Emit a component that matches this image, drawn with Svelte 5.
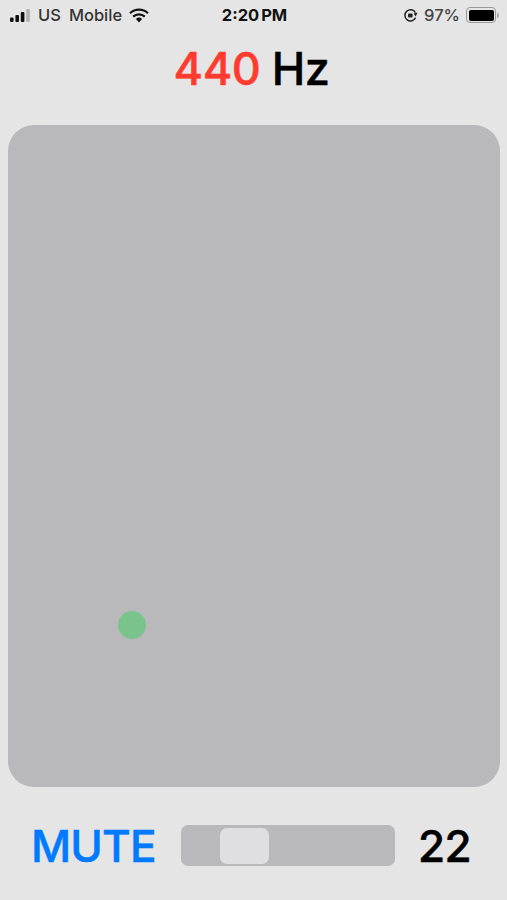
<script>
  let frequency = 440;
  let volume = 22;
  // dot position inside the pad
  let dot = { x: 123.5, y: 500 };
</script>

<div class="screen">
  <div class="status">
    <div class="left">
      <svg class="signal" width="22" height="14" viewBox="0 0 22 14">
        <rect x="0" y="9.5" width="3.6" height="4.5" rx="1" fill="#111" />
        <rect x="5.4" y="7" width="3.6" height="7" rx="1" fill="#111" />
        <rect x="10.8" y="4" width="3.6" height="10" rx="1" fill="#111" />
        <rect x="16.2" y="1" width="3.6" height="13" rx="1" fill="#b4b4b4" />
      </svg>
      <span class="carrier">US</span>
      <span class="carrier">Mobile</span>
      <svg class="wifi" width="20" height="15" viewBox="0 0 20 15">
        <path d="M1 5.2a13 13 0 0 1 18 0" fill="none" stroke="#111" stroke-width="2.2" />
        <path d="M4.2 8.6a8.4 8.4 0 0 1 11.6 0" fill="none" stroke="#111" stroke-width="2.2" />
        <path d="M6.9 11a4.6 4.6 0 0 1 6.2 0L10 14.4z" fill="#111" />
      </svg>
    </div>
    <div class="time">2:20<span class="pm">PM</span></div>
    <div class="right">
      <svg class="lock" width="15" height="15" viewBox="0 0 15 15">
        <path d="M12.6 9.6A5.6 5.6 0 1 1 12.4 4.6" fill="none" stroke="#222" stroke-width="1.5" />
        <path d="M14.6 4.6 L10.6 5.6 L12.6 8.4z" fill="#222" />
        <rect x="5" y="5.4" width="4.6" height="4.2" rx="1" fill="#222" />
      </svg>
      <span class="battery-text">97%</span>
      <div class="battery">
        <div class="battery-fill"></div>
      </div>
      <div class="battery-cap"></div>
    </div>
  </div>

  <div class="freq"><span class="num">{frequency}</span> Hz</div>

  <div class="pad">
    <div class="dot" style="left: {dot.x - 14}px; top: {dot.y - 14}px"></div>
  </div>

  <div class="controls">
    <span class="mute">MUTE</span>
    <div class="slider">
      <div class="thumb"></div>
    </div>
    <span class="value">{volume}</span>
  </div>
</div>

<style>
  :global(body) {
    background: #e5e5e5;
  }
  .screen {
    width: 507px;
    height: 900px;
    background: #e5e5e5;
    font-family: Inter, "Liberation Sans", sans-serif;
    color: #000;
    display: flex;
    flex-direction: column;
    overflow: hidden;
  }
  .status {
    height: 30px;
    display: grid;
    grid-template-columns: 1fr auto 1fr;
    align-items: center;
    padding: 0 8px 0 10px;
    font-size: 16.5px;
    color: #222;
  }
  .left {
    display: flex;
    align-items: center;
    gap: 8px;
  }
  .signal {
    margin-right: -2px;
  }
  .carrier {
    font-weight: 500;
    color: #333;
  }
  .wifi {
    margin-left: -1px;
  }
  .time {
    font-weight: 700;
    font-size: 16.5px;
    color: #111;
  }
  .pm {
    margin-left: 2px;
  }
  .right {
    display: flex;
    align-items: center;
    justify-content: flex-end;
    gap: 6px;
  }
  .battery-text {
    font-weight: 500;
    color: #444;
  }
  .battery {
    width: 30px;
    height: 16px;
    box-sizing: border-box;
    border: 1.5px solid #999;
    border-radius: 4px;
    padding: 1.5px;
  }
  .battery-fill {
    height: 100%;
    background: #000;
    border-radius: 2px;
  }
  .battery-cap {
    width: 2px;
    height: 5px;
    background: #aaa;
    border-radius: 0 2px 2px 0;
    margin-left: -5px;
  }
  .freq {
    height: 95px;
    padding-top: 9px;
    padding-right: 4px;
    box-sizing: border-box;
    text-align: center;
    font-size: 45px;
    font-weight: 500;
    -webkit-text-stroke: 0.5px;
    line-height: 60px;
    letter-spacing: -0.5px;
  }
  .num {
    color: #ff3b30;
  }
  .pad {
    position: relative;
    height: 662px;
    margin: 0 7px 0 8px;
    background: #b9b9bb;
    border-radius: 26px;
  }
  .dot {
    position: absolute;
    width: 28px;
    height: 28px;
    border-radius: 50%;
    background: #7bc38c;
  }
  .controls {
    display: flex;
    align-items: center;
    height: 41px;
    margin-top: 38px;
    padding-left: 31px;
  }
  .mute {
    width: 150px;
    font-size: 44px;
    font-weight: 500;
    -webkit-text-stroke: 0.5px;
    letter-spacing: -0.8px;
    color: #007aff;
    white-space: nowrap;
  }
  .slider {
    width: 214px;
    height: 41px;
    background: #b9b9bb;
    border-radius: 7px;
    display: flex;
    align-items: center;
    padding-left: 39px;
    box-sizing: border-box;
  }
  .thumb {
    width: 49px;
    height: 36px;
    background: #dfdfe1;
    border-radius: 7px;
  }
  .value {
    margin-left: 23px;
    font-size: 44px;
    font-weight: 500;
    -webkit-text-stroke: 0.5px;
    letter-spacing: -0.6px;
  }
</style>
